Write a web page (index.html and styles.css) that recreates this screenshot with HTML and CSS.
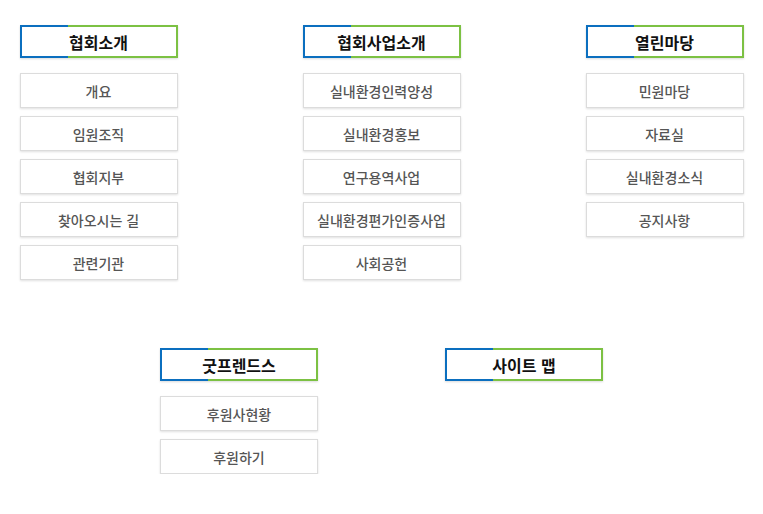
FILE: index.html
```html
<!DOCTYPE html>
<html lang="ko">

<head>
    <meta charset="UTF-8">
    <meta name="viewport" content="width=device-width, initial-scale=1.0">
    <title>사이트 맵</title>
    <link rel="stylesheet" href="styles.css">
</head>

<body>
    <div class="sitemap">
        <div class="row">
            <div class="group">
                <h2 class="group-title">협회소개</h2>
                <ul class="menu">
                    <li>개요</li>
                    <li>임원조직</li>
                    <li>협회지부</li>
                    <li>찾아오시는 길</li>
                    <li>관련기관</li>
                </ul>
            </div>
            <div class="group">
                <h2 class="group-title">협회사업소개</h2>
                <ul class="menu">
                    <li>실내환경인력양성</li>
                    <li>실내환경홍보</li>
                    <li>연구용역사업</li>
                    <li>실내환경편가인증사업</li>
                    <li>사회공헌</li>
                </ul>
            </div>
            <div class="group">
                <h2 class="group-title">열린마당</h2>
                <ul class="menu">
                    <li>민원마당</li>
                    <li>자료실</li>
                    <li>실내환경소식</li>
                    <li>공지사항</li>
                </ul>
            </div>
        </div>
        <div class="row row-second">
            <div class="group">
                <h2 class="group-title">굿프렌드스</h2>
                <ul class="menu">
                    <li>후원사현황</li>
                    <li>후원하기</li>
                </ul>
            </div>
            <div class="group">
                <h2 class="group-title">사이트 맵</h2>
            </div>
        </div>
    </div>
</body>

</html>
```

FILE: styles.css
```css
body {
    margin: 0;
    padding: 0;
    background-color: #fff;
    font-family: "Noto Sans CJK KR", "Noto Sans", sans-serif;
}

.sitemap {
    padding-top: 25px;
}

.row {
    display: flex;
    justify-content: center;
    align-items: flex-start;
    gap: 125px;
}

.row-second {
    margin-top: 68px;
    gap: 127px;
}

.group {
    width: 158px;
}

.group-title {
    position: relative;
    margin: 0;
    height: 33px;
    box-sizing: border-box;
    border: 2px solid #7cc143;
    box-shadow: 0 1px 2px rgba(0, 0, 0, 0.15);
    display: flex;
    justify-content: center;
    align-items: center;
    font-size: 16px;
    font-weight: bold;
    color: #111;
}

.group-title::before {
    content: "";
    position: absolute;
    top: -2px;
    left: -2px;
    bottom: -2px;
    width: 46px;
    border: 2px solid #0b6fbf;
    border-right: none;
}

.menu {
    list-style: none;
    margin: 15px 0 0;
    padding: 0;
    display: flex;
    flex-direction: column;
    gap: 8px;
}

.menu li {
    height: 35px;
    box-sizing: border-box;
    border: 1px solid #dcdcdc;
    box-shadow: 0 1px 2px rgba(0, 0, 0, 0.12);
    display: flex;
    justify-content: center;
    align-items: center;
    font-size: 14px;
    font-weight: 500;
    color: #555;
}
```
